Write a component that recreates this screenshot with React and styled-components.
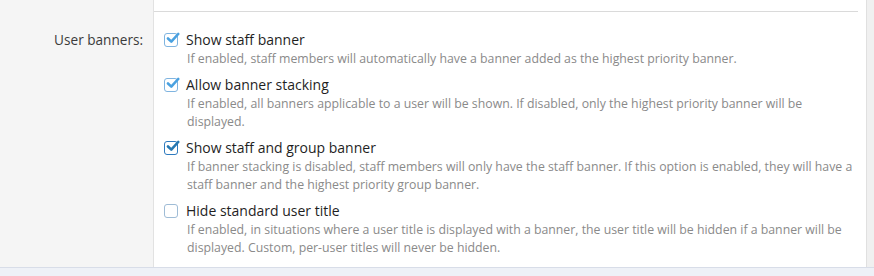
import React from "react";
import styled, { createGlobalStyle } from "styled-components";

const GlobalStyle = createGlobalStyle`
  html, body {
    margin: 0;
    padding: 0;
    background: #f3f5f9;
  }
  body {
    font-family: "Open Sans", "Noto Sans", sans-serif;
  }
`;

const Page = styled.div`
  width: 874px;
  height: 276px;
  display: flex;
  flex-direction: column;
  background: #eef1f7;
`;

const FormBlock = styled.div`
  display: flex;
  flex-direction: column;
  height: 267px;
  border-bottom: 1px solid #d8dde8;
  background: #f5f5f5;
`;

const TopRow = styled.div`
  display: flex;
  height: 12px;
`;

const RowBody = styled.div`
  display: flex;
  flex: 1;
`;

const LabelCol = styled.div`
  width: 154px;
  flex-shrink: 0;
  border-right: 1px solid #e2e2e2;
  box-sizing: border-box;
  padding: 18px 10px 0 0;
  text-align: right;
  font-size: 13.6px;
  line-height: 20px;
  color: #3b3b3b;
`;

const TopLabel = styled.div`
  width: 154px;
  flex-shrink: 0;
  border-right: 1px solid #e2e2e2;
  box-sizing: border-box;
`;

const TopContent = styled.div`
  width: 704px;
  background: #fff;
  border-bottom: 1px solid #dadada;
`;

const ContentCol = styled.div`
  width: 712px;
  background: #fff;
  padding: 18px 12px 0 10px;
  box-sizing: border-box;
  display: flex;
  flex-direction: column;
  gap: 7px;
`;

const TopFill = styled.div`
  width: 8px;
  background: #fff;
`;

const Gutter = styled.div`
  flex: 1;
  border-left: 1px solid #e0e0e0;
  background: #f0f0f0;
`;

const Option = styled.div`
  display: flex;
  flex-direction: column;
`;

const OptionLabel = styled.label`
  display: flex;
  align-items: center;
  gap: 8px;
  font-size: 14px;
  line-height: 20px;
  color: #1f1f1f;
`;

const Box = styled.span`
  width: 14px;
  height: 14px;
  box-sizing: border-box;
  border: 1px solid ${(p) => (p.$dark ? "#2f7bbf" : "#7fb4e0")};
  border-radius: 3px;
  background: #fff;
  position: relative;
  flex-shrink: 0;
  ${(p) => !p.$checked && "border-color: #9fbcd6;"}
`;

const Check = styled.svg`
  position: absolute;
  left: 1px;
  top: -2px;
`;

const Hint = styled.div`
  padding-left: 23px;
  font-size: 12.3px;
  line-height: 18px;
  color: #8a8a8a;
`;

const CheckBox = ({ checked, dark }) => (
  <Box $checked={checked} $dark={dark}>
    {checked && (
      <Check width="14" height="13" viewBox="0 0 14 13">
        <path
          d="M2 6.5 L5.3 9.6 L12.2 2"
          fill="none"
          stroke={dark ? "#2577b1" : "#4aa1e0"}
          strokeWidth="2.6"
          strokeLinecap="round"
          strokeLinejoin="round"
        />
      </Check>
    )}
  </Box>
);

const options = [
  {
    label: "Show staff banner",
    checked: true,
    hint: "If enabled, staff members will automatically have a banner added as the highest priority banner.",
  },
  {
    label: "Allow banner stacking",
    checked: true,
    hint: "If enabled, all banners applicable to a user will be shown. If disabled, only the highest priority banner will be displayed.",
  },
  {
    label: "Show staff and group banner",
    checked: true,
    dark: true,
    hint: "If banner stacking is disabled, staff members will only have the staff banner. If this option is enabled, they will have a staff banner and the highest priority group banner.",
  },
  {
    label: "Hide standard user title",
    checked: false,
    hint: "If enabled, in situations where a user title is displayed with a banner, the user title will be hidden if a banner will be displayed. Custom, per-user titles will never be hidden.",
  },
];

export default function App() {
  return (
    <Page>
      <GlobalStyle />
      <FormBlock>
        <TopRow>
          <TopLabel />
          <TopContent />
          <TopFill />
          <Gutter />
        </TopRow>
        <RowBody>
          <LabelCol>User banners:</LabelCol>
          <ContentCol>
            {options.map((o) => (
              <Option key={o.label}>
                <OptionLabel>
                  <CheckBox checked={o.checked} dark={o.dark} />
                  {o.label}
                </OptionLabel>
                <Hint>{o.hint}</Hint>
              </Option>
            ))}
          </ContentCol>
          <Gutter />
        </RowBody>
      </FormBlock>
    </Page>
  );
}
